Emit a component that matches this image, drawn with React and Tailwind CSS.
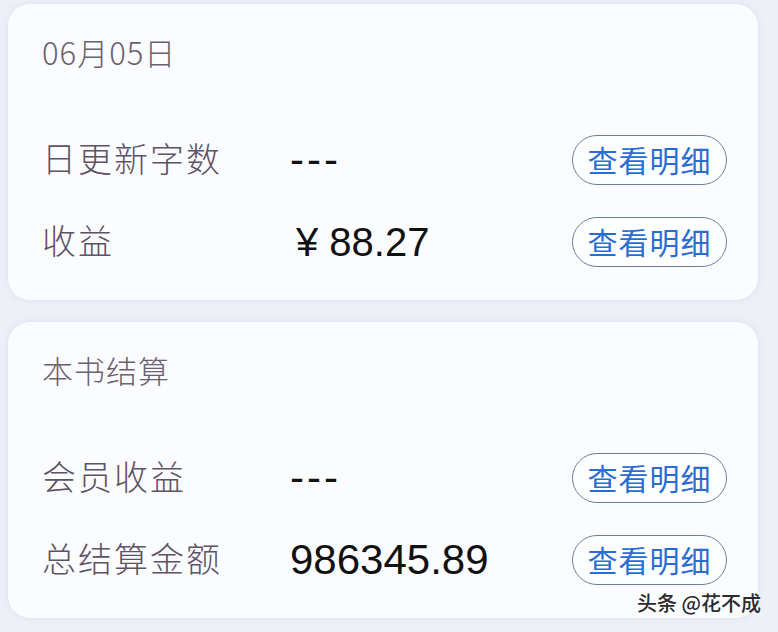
import React from 'react';

const cjk = '[font-family:"Noto_Sans_CJK_SC","Noto_Sans",sans-serif]';

// Pill button used on every row
const DetailButton = () => (
  <button
    className={`h-[50px] w-[155px] rounded-full border border-[#6f7f9a] bg-[#fdfeff] pb-[2px] text-[30px] leading-none text-[#2a6dd0] tracking-[1px] ${cjk}`}
  >
    查看明细
  </button>
);

const Row = ({ label, value }) => (
  <div className="flex h-[82px] items-center">
    <div className={`w-[248px] pb-[5px] text-[34px] font-light tracking-[2px] text-[#5e5364] ${cjk}`}>{label}</div>
    <div className='flex-1 text-[42px] leading-none text-[#111] [font-family:"Liberation_Sans",Arial,sans-serif]'>
      {value}
    </div>
    <DetailButton />
  </div>
);

const Dashes = () => <span className="tracking-[3px]">---</span>;

const Card = ({ title, rows }) => (
  <div className="flex h-[296px] flex-col rounded-[22px] bg-[#fbfcff] pl-[34px] pr-[31px] pt-[28px] shadow-[0_0_6px_rgba(205,210,230,0.6)]">
    <div className={`h-[40px] text-[31px] font-light leading-[40px] tracking-[1px] text-[#6b6070] ${cjk}`}>{title}</div>
    <div className="mt-[47px] flex flex-col">
      {rows.map((r) => (
        <Row key={r.label} label={r.label} value={r.value} />
      ))}
    </div>
  </div>
);

export default function App() {
  return (
    <div className="relative flex h-[632px] w-[778px] flex-col gap-[22px] overflow-hidden bg-[#eef0f8] px-[8px] pt-[4px] pr-[20px]">
      <Card
        title="06月05日"
        rows={[
          { label: '日更新字数', value: <Dashes /> },
          { label: '收益', value: <span className="pl-[6px] text-[40px]">¥ 88.27</span> },
        ]}
      />
      <Card
        title="本书结算"
        rows={[
          { label: '会员收益', value: <Dashes /> },
          { label: '总结算金额', value: '986345.89' },
        ]}
      />
      <div
        className={`absolute right-[17px] top-[590px] text-[20px] font-medium leading-[26px] text-[#2b2b2b] [text-shadow:0_0_3px_#fff,0_0_2px_#fff] ${cjk}`}
      >
        头条 @花不成
      </div>
    </div>
  );
}
